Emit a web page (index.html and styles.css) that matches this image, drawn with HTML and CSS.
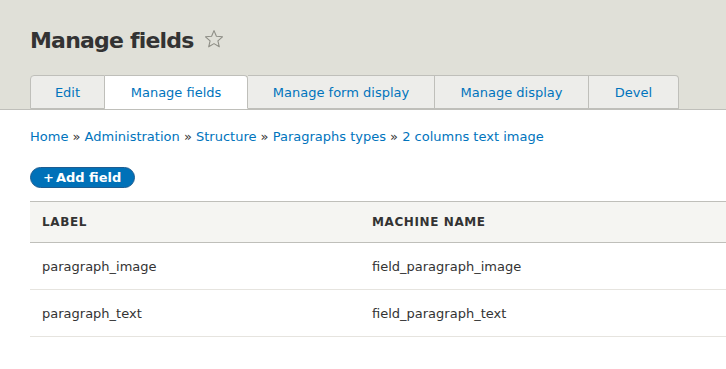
FILE: index.html
```html
<!DOCTYPE html>
<html>
<head>
<meta charset="utf-8">
<link rel="stylesheet" href="styles.css">
</head>
<body>
<header class="header">
  <div class="title-row">
    <h1 class="page-title">Manage fields</h1>
    <svg class="star" width="20" height="20" viewBox="0 0 20 20"><path d="M10 1.6 L12.4 7.3 L18.5 7.8 L13.9 11.8 L15.3 17.8 L10 14.6 L4.7 17.8 L6.1 11.8 L1.5 7.8 L7.6 7.3 Z" fill="none" stroke="#8e8e86" stroke-width="1.1" stroke-linejoin="round"/></svg>
  </div>
  <nav class="tabs">
    <a class="tab first" href="#">Edit</a>
    <a class="tab active" href="#">Manage fields</a>
    <a class="tab" href="#">Manage form display</a>
    <a class="tab" href="#">Manage display</a>
    <a class="tab last" href="#">Devel</a>
  </nav>
</header>
<main class="content">
  <div class="breadcrumb">
    <a href="#">Home</a> » <a href="#">Administration</a> » <a href="#">Structure</a> » <a href="#">Paragraphs types</a> » <a href="#">2 columns text image</a>
  </div>
  <div class="actions"><a class="button" href="#">+<span class="btn-label">Add field</span></a></div>
  <table class="fields">
    <thead>
      <tr><th class="col-label">Label</th><th>Machine name</th></tr>
    </thead>
    <tbody>
      <tr><td class="col-label">paragraph_image</td><td>field_paragraph_image</td></tr>
      <tr><td class="col-label">paragraph_text</td><td>field_paragraph_text</td></tr>
    </tbody>
  </table>
</main>
</body>
</html>
```
FILE: styles.css
```css
html, body { margin: 0; padding: 0; }
body {
  font-family: "DejaVu Sans", sans-serif;
  font-size: 13px;
  color: #333;
  background: #fff;
  overflow: hidden;
}
a { color: #0074bd; text-decoration: none; }
.header {
  background: #e0e0d8;
  border-bottom: 1px solid #bfbfba;
  padding: 0 30px;
  height: 109px;
  box-sizing: content-box;
  display: flex;
  flex-direction: column;
}
.title-row {
  display: flex;
  align-items: center;
  height: 75px;
  padding-top: 5px;
  box-sizing: border-box;
}
.page-title {
  margin: 0;
  font-size: 22px;
  font-weight: bold;
  color: #333;
  letter-spacing: -0.8px;
}
.star { margin-left: 10px; margin-top: -2px; }
.tabs {
  display: flex;
  height: 34px;
  margin-bottom: -1px;
}
.tab {
  display: flex;
  align-items: center;
  justify-content: center;
  height: 34px;
  box-sizing: border-box;
  background: #ededea;
  border: 1px solid #bfbfba;
  border-left: none;
  font-size: 13px;
  color: #0074bd;
  padding-top: 1px;
}
.tab:nth-child(1) { width: 75px; }
.tab:nth-child(2) { width: 143px; }
.tab:nth-child(3) { width: 187px; }
.tab:nth-child(4) { width: 154px; }
.tab:nth-child(5) { width: 90px; }
.tab.first { border-left: 1px solid #bfbfba; border-top-left-radius: 4px; }
.tab.last { border-top-right-radius: 4px; }
.tab.active {
  background: #fff;
  border-bottom-color: #fff;
  border-top-right-radius: 4px;
}
.content { padding: 0 0 0 30px; }
.breadcrumb {
  margin-top: 19px;
  line-height: 16px;
  color: #333;
  font-size: 13px;
}
.actions { margin-top: 22px; height: 22px; }
.button {
  display: inline-flex;
  align-items: center;
  height: 21px;
  box-sizing: border-box;
  padding: 0 13px 0 12px;
  background: #0071b8;
  border: 1px solid #1e5c90;
  border-radius: 11px;
  color: #fff;
  font-weight: bold;
  font-size: 13px;
}
.btn-label { margin-left: 2px; }
.fields {
  margin-top: 12px;
  width: 100%;
  border-collapse: collapse;
}
.fields th {
  background: #f5f5f2;
  border-top: 1px solid #bfbfba;
  border-bottom: 1px solid #bfbfba;
  text-align: left;
  text-transform: uppercase;
  font-size: 12px;
  font-weight: bold;
  color: #333;
  height: 40px;
  padding: 0 12px;
  letter-spacing: 0.6px;
}
.fields td {
  border-bottom: 1px solid #e6e4df;
  height: 46px;
  padding: 0 12px;
  font-size: 13px;
  color: #333;
}
.col-label { width: 306px; }
```
